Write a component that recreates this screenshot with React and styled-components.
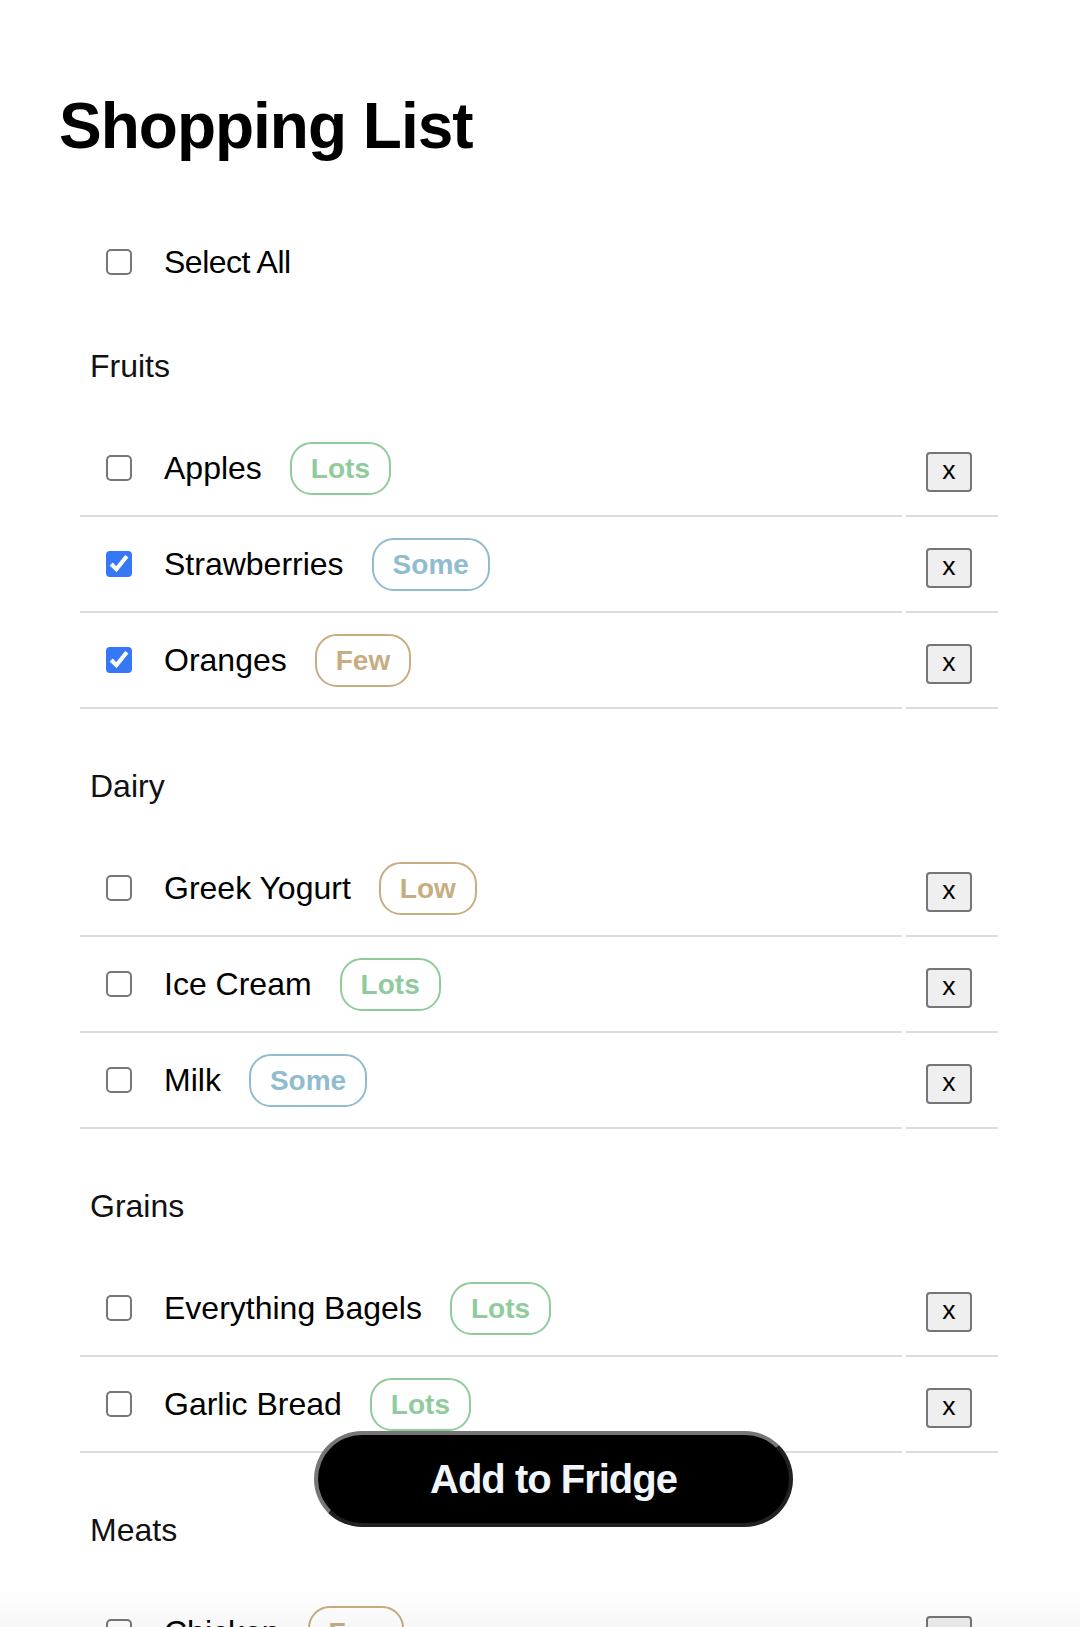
import React, { useState } from "react";
import styled, { createGlobalStyle } from "styled-components";

const GlobalStyle = createGlobalStyle`
  html, body {
    margin: 0;
    padding: 0;
    background: #ffffff;
    color: #000000;
    font-family: "Liberation Sans", Arial, sans-serif;
  }
`;

const Page = styled.main`
  padding: 88px 82px 200px 80px;
`;

const Title = styled.h1`
  margin: 0 0 68px -21px;
  font-size: 64px;
  line-height: 76px;
  font-weight: 700;
  letter-spacing: -1px;
`;

const SelectRow = styled.label`
  display: flex;
  align-items: center;
  height: 60px;
  padding-left: 26px;
  font-size: 32px;
  letter-spacing: -0.5px;
  gap: 32px;
`;

const Check = styled.input.attrs({ type: "checkbox" })`
  width: 13px;
  height: 13px;
  margin: 0;
  zoom: 2;
  accent-color: #3478f6;
  flex: none;
`;

const Section = styled.section`
  margin-top: ${(p) => (p.$first ? "52px" : "55px")};
`;

const Heading = styled.h2`
  margin: 0 0 33px 10px;
  font-size: 32px;
  line-height: 44px;
  font-weight: 400;
  color: #111;
`;

const Row = styled.div`
  display: grid;
  grid-template-columns: 1fr 92px;
  column-gap: 4px;
`;

const MainCell = styled.div`
  display: flex;
  align-items: center;
  height: 94px;
  padding-left: 26px;
  border-bottom: 2px solid #dcdcdc;
`;

const SideCell = styled.div`
  display: flex;
  align-items: center;
  box-sizing: border-box;
  height: 96px;
  padding: 7px 0 0 20px;
  border-bottom: 2px solid #dcdcdc;
`;

const ItemName = styled.span`
  margin-left: 32px;
  font-size: 32px;
  line-height: 40px;
`;

const badgeColors = {
  Lots: "#8fcb9b",
  Some: "#8fbccf",
  Few: "#c8ad82",
  Low: "#c8ad82",
};

const Badge = styled.span`
  margin-left: 28px;
  padding: 4px 19px;
  border: 2px solid ${(p) => p.$color};
  border-radius: 22px;
  color: ${(p) => p.$color};
  font-size: 28px;
  line-height: 41px;
  font-weight: 700;
`;

const RemoveButton = styled.button`
  width: 46px;
  height: 40px;
  padding: 0 0 4px;
  border: 2px solid #767676;
  border-radius: 4px;
  background: #efefef;
  color: #000;
  font-family: "Liberation Sans", Arial, sans-serif;
  font-size: 26.67px;
  line-height: 30px;
`;

const FridgeButton = styled.button`
  position: fixed;
  left: 314px;
  bottom: 100px;
  width: 479px;
  height: 96px;
  border: 4px outset #767676;
  border-radius: 48px;
  background: #000;
  color: #f0f6fc;
  font-family: "Liberation Sans", Arial, sans-serif;
  font-size: 40px;
  font-weight: 700;
  letter-spacing: -1px;
  z-index: 2;
`;

const BottomFade = styled.div`
  position: fixed;
  left: 0;
  right: 0;
  bottom: 0;
  height: 40px;
  background: linear-gradient(rgba(0, 0, 0, 0), rgba(0, 0, 0, 0.03));
  pointer-events: none;
  z-index: 3;
`;

const initial = [
  {
    name: "Fruits",
    items: [
      { name: "Apples", amount: "Lots", checked: false },
      { name: "Strawberries", amount: "Some", checked: true },
      { name: "Oranges", amount: "Few", checked: true },
    ],
  },
  {
    name: "Dairy",
    items: [
      { name: "Greek Yogurt", amount: "Low", checked: false },
      { name: "Ice Cream", amount: "Lots", checked: false },
      { name: "Milk", amount: "Some", checked: false },
    ],
  },
  {
    name: "Grains",
    items: [
      { name: "Everything Bagels", amount: "Lots", checked: false },
      { name: "Garlic Bread", amount: "Lots", checked: false },
    ],
  },
  {
    name: "Meats",
    items: [
      { name: "Chicken", amount: "Few", checked: false },
      { name: "Ground Beef", amount: "Some", checked: false },
    ],
  },
];

export default function App() {
  const [groups, setGroups] = useState(initial);

  const toggle = (gi, ii) =>
    setGroups((gs) =>
      gs.map((g, a) =>
        a !== gi
          ? g
          : { ...g, items: g.items.map((it, b) => (b === ii ? { ...it, checked: !it.checked } : it)) }
      )
    );

  const remove = (gi, ii) =>
    setGroups((gs) =>
      gs.map((g, a) => (a !== gi ? g : { ...g, items: g.items.filter((_, b) => b !== ii) }))
    );

  const allChecked = groups.every((g) => g.items.every((i) => i.checked));
  const selectAll = () =>
    setGroups((gs) =>
      gs.map((g) => ({ ...g, items: g.items.map((i) => ({ ...i, checked: !allChecked })) }))
    );

  return (
    <>
      <GlobalStyle />
      <Page>
        <Title>Shopping List</Title>
        <SelectRow>
          <Check checked={allChecked} onChange={selectAll} />
          Select All
        </SelectRow>
        {groups.map((g, gi) => (
          <Section key={g.name} $first={gi === 0}>
            <Heading>{g.name}</Heading>
            {g.items.map((it, ii) => (
              <Row key={it.name}>
                <MainCell>
                  <Check checked={it.checked} onChange={() => toggle(gi, ii)} />
                  <ItemName>{it.name}</ItemName>
                  <Badge $color={badgeColors[it.amount]}>{it.amount}</Badge>
                </MainCell>
                <SideCell>
                  <RemoveButton onClick={() => remove(gi, ii)}>x</RemoveButton>
                </SideCell>
              </Row>
            ))}
          </Section>
        ))}
      </Page>
      <FridgeButton>Add to Fridge</FridgeButton>
      <BottomFade />
    </>
  );
}
